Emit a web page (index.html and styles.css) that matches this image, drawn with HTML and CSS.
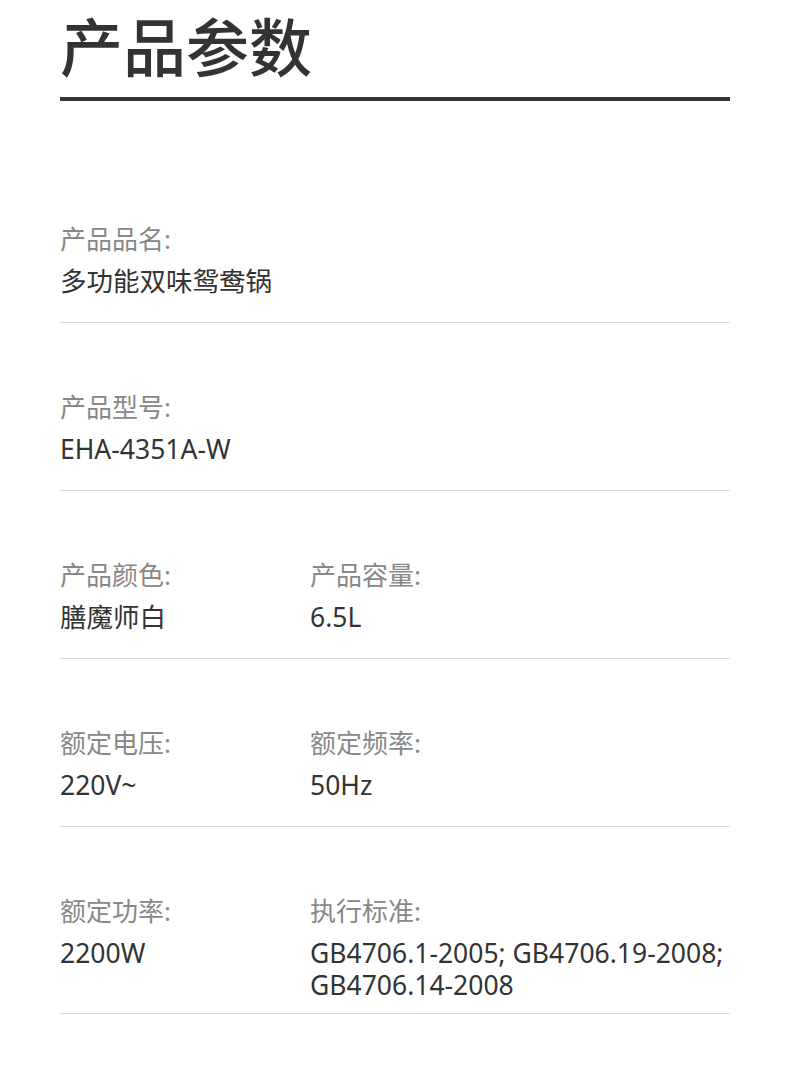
FILE: index.html
```html
<!DOCTYPE html>
<html lang="zh-CN">
<head>
<meta charset="utf-8">
<title>产品参数</title>
<link rel="stylesheet" href="styles.css">
</head>
<body>
<div class="page">
  <h1 class="title">产品参数</h1>
  <div class="specs">
    <div class="row">
      <div class="item">
        <div class="label">产品品名:</div>
        <div class="value">多功能双味鸳鸯锅</div>
      </div>
    </div>
    <div class="row">
      <div class="item">
        <div class="label">产品型号:</div>
        <div class="value">EHA-4351A-W</div>
      </div>
    </div>
    <div class="row">
      <div class="item">
        <div class="label">产品颜色:</div>
        <div class="value">膳魔师白</div>
      </div>
      <div class="item">
        <div class="label">产品容量:</div>
        <div class="value">6.5L</div>
      </div>
    </div>
    <div class="row">
      <div class="item">
        <div class="label">额定电压:</div>
        <div class="value">220V~</div>
      </div>
      <div class="item">
        <div class="label">额定频率:</div>
        <div class="value">50Hz</div>
      </div>
    </div>
    <div class="row">
      <div class="item">
        <div class="label">额定功率:</div>
        <div class="value">2200W</div>
      </div>
      <div class="item">
        <div class="label">执行标准:</div>
        <div class="value"><span class="code">GB4706.1-2005;</span> <span class="code">GB4706.19-2008;</span> <span class="code">GB4706.14-2008</span></div>
      </div>
    </div>
  </div>
</div>
</body>
</html>
```
FILE: styles.css
```css
html, body {
  margin: 0;
  padding: 0;
  background: #ffffff;
}

body {
  font-family: "Noto Sans", "Noto Sans CJK SC", sans-serif;
  color: #333333;
}

.page {
  padding: 0 60px;
}

.title {
  margin: 0;
  padding-top: 4px;
  box-sizing: border-box;
  height: 101px;
  font-family: "Noto Sans CJK SC", sans-serif;
  font-size: 63px;
  font-weight: 500;
  line-height: 80px;
  color: #333333;
  border-bottom: 4px solid #363636;
}

.specs {
  padding-top: 54px;
}

.row {
  display: grid;
  grid-template-columns: 250px 1fr;
  padding: 58px 0 12px;
  border-bottom: 1px solid #dcdcdc;
}

.label {
  font-size: 26px;
  line-height: 52px;
  color: #888888;
}

.value {
  font-size: 26.5px;
  line-height: 32px;
  min-height: 45px;
  color: #333333;
}

.code {
  white-space: nowrap;
}
```
